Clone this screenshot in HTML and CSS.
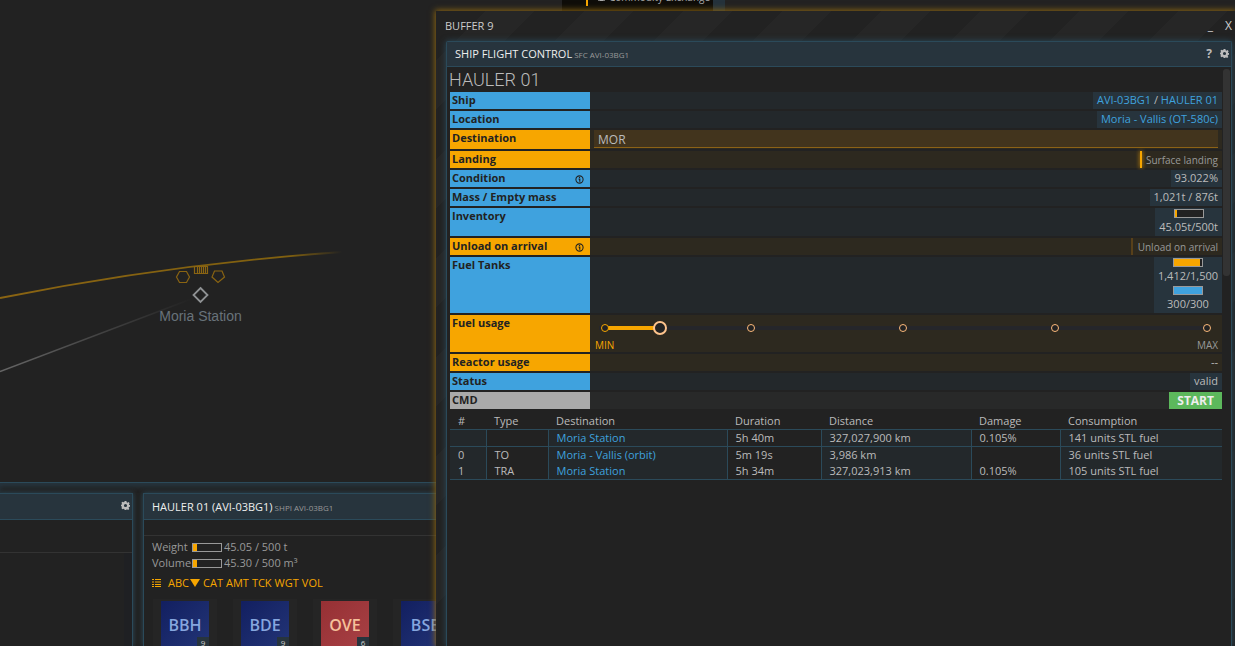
FILE: index.html
```
<!DOCTYPE html>
<html lang="en">
<head>
<meta charset="utf-8">
<title>Ship Flight Control</title>
<link rel="stylesheet" href="styles.css">
</head>
<body>
<svg class="defs" aria-hidden="true">
  <symbol id="gear" viewBox="0 0 16 16">
    <path fill="currentColor" fill-rule="evenodd" d="M6.400 0h3.200l.5 2.400 1.200.5L13.400 1.600l2 2.200-1.300 2 .5 1.100 1.400.4v2.900l-1.800.5-.6 1.300 1.200 2-2.200 2-2-1.200-1.100.5L9.600 16H6.400l-.5-1.900-1.200-.5-2 1.200-2.100-2.200 1.200-1.900-.5-1.200L0 9.600V6.800l1.400-.4.5-1.200-1.200-1.900 2.100-2.100 2 1.200 1.100-.5zM8 5.200a2.800 2.800 0 1 0 0 5.600 2.800 2.800 0 0 0 0-5.600z"/>
  </symbol>
  <symbol id="info" viewBox="0 0 10 10">
    <circle cx="5" cy="5" r="4" fill="none" stroke="currentColor" stroke-width="1.200"/>
    <path d="M4 4.500h1.300v3M5 2.200v1.100" fill="none" stroke="currentColor" stroke-width="1.300"/>
  </symbol>
</svg>

<main class="desktop">
  <section class="map">
    <svg class="map-view" width="436" height="482" viewBox="0 0 436 482">
      <defs>
        <linearGradient id="orbit" gradientUnits="userSpaceOnUse" x1="0" y1="0" x2="342" y2="0">
          <stop offset="0" stop-color="#8a6412"/><stop offset=".85" stop-color="#80600f"/><stop offset="1" stop-color="#80600f" stop-opacity="0"/>
        </linearGradient>
        <linearGradient id="trail" gradientUnits="userSpaceOnUse" x1="0" y1="0" x2="192" y2="0">
          <stop offset="0" stop-color="#666"/><stop offset="1" stop-color="#666" stop-opacity="0"/>
        </linearGradient>
      </defs>
      <path d="M0 298Q170 264 342 252" fill="none" stroke="url(#orbit)" stroke-width="1.800"/>
      <path d="M0 371.500Q98 334 194 298" fill="none" stroke="url(#trail)" stroke-width="1.400"/>
      <g fill="none" stroke="#8a6412" stroke-width="1.200">
        <path d="M179.500 271.500h7l3 5.500-3 5.500h-7l-3-5.500z"/>
        <path d="M214.500 271h7.500l2.500 6-6.500 5.500-6-5.500z"/>
        <path d="M194.500 266.500h13v7h-13zM197.500 267v6M199.500 267v6M201.500 267v6M203.500 267v6M205.500 267v6"/>
      </g>
      <path d="M200.500 288l7 7-7 7-7-7z" fill="none" stroke="#8f9294" stroke-width="1.800"/>
      <text class="map-label" x="200.500" y="321" text-anchor="middle">Moria Station</text>
    </svg>
  </section>

  <section class="dock">
    <article class="tile tile-left">
      <header class="tile-head"><button class="icon-btn push" aria-label="Settings"><svg><use href="#gear"/></svg></button></header>
      <div class="tile-bar"></div>
      <div class="tile-scroll"></div>
    </article>
    <article class="tile tile-ship">
      <header class="tile-head"><h2>HAULER 01 (AVI-03BG1)</h2><small>SHPI AVI-03BG1</small></header>
      <div class="tile-gap"></div>
      <div class="capacity">
        <div class="cap-row"><span class="cap-name">Weight</span><span class="gauge"><i style="width:13%"></i></span><span>45.05 / 500 t</span></div>
        <div class="cap-row"><span class="cap-name">Volume</span><span class="gauge"><i style="width:13%"></i></span><span>45.30 / 500 m³</span></div>
      </div>
      <nav class="sort">
        <button aria-label="List view"><svg width="9" height="8" viewBox="0 0 9 8"><path d="M0 .500h2m1 0h6M0 3h2m1 0h6M0 5.500h2m1 0h6M0 7.500h2m1 0h6" stroke="currentColor" fill="none"/></svg></button>
        <button>ABC<svg width="10" height="8" viewBox="0 0 10 8"><path d="M0 0h10L5 8z" fill="currentColor"/></svg></button>
        <button>CAT</button><button>AMT</button><button>TCK</button><button>WGT</button><button>VOL</button>
      </nav>
      <div class="items">
        <div class="slot"><div class="item blue">BBH<span class="count">9</span></div></div>
        <div class="slot"><div class="item blue">BDE<span class="count">9</span></div></div>
        <div class="slot"><div class="item red">OVE<span class="count">6</span></div></div>
        <div class="slot"><div class="item blue">BSE<span class="count">9</span></div></div>
      </div>
    </article>
  </section>

  <div class="menu">
    <div class="menu-item"><svg width="9" height="9" viewBox="0 0 9 9"><rect x=".500" y=".500" width="8" height="7" rx="2" fill="none" stroke="#aaa"/></svg>Commodity Exchange</div>
  </div>

  <section class="window">
    <header class="win-head">
      <h1>BUFFER 9</h1>
      <button class="push" aria-label="Minimize">_</button>
      <button aria-label="Close">X</button>
    </header>
    <div class="frame">
      <header class="frame-head">
        <h2>SHIP FLIGHT CONTROL</h2><small>SFC AVI-03BG1</small>
        <button class="help push" aria-label="Help">?</button>
        <button class="icon-btn" aria-label="Settings"><svg><use href="#gear"/></svg></button>
      </header>
      <div class="content">
        <div class="pane">
          <h3>HAULER 01</h3>
          <form class="form">
            <div class="row"><span class="label">Ship</span><div class="field"><div class="value"><a href="#">AVI-03BG1</a> / <a href="#">HAULER 01</a></div></div></div>
            <div class="row"><span class="label">Location</span><div class="field"><div class="value"><a href="#">Moria - Vallis (OT-580c)</a></div></div></div>
            <div class="row active"><label class="label" for="dest">Destination</label><div class="field"><input class="text" id="dest" type="text" value="MOR"></div></div>
            <div class="row active"><span class="label">Landing</span><div class="field"><label class="toggle"><input type="checkbox" checked>Surface landing</label></div></div>
            <div class="row"><span class="label">Condition<svg class="info"><use href="#info"/></svg></span><div class="field"><div class="value">93.022%</div></div></div>
            <div class="row"><span class="label">Mass / Empty mass</span><div class="field"><div class="value">1,021t / 876t</div></div></div>
            <div class="row"><span class="label">Inventory</span><div class="field"><div class="value stack"><span class="gauge dark"><i style="width:9%"></i></span><span class="amount">45.05t/500t</span></div></div></div>
            <div class="row active"><span class="label">Unload on arrival<svg class="info"><use href="#info"/></svg></span><div class="field"><label class="toggle wide"><input type="checkbox">Unload on arrival</label></div></div>
            <div class="row"><span class="label">Fuel Tanks</span><div class="field"><div class="value stack"><span class="gauge dark"><i style="width:94%"></i></span><span class="amount">1,412/1,500</span><span class="gauge dark sky"><i style="width:100%"></i></span><span class="amount">300/300</span></div></div></div>
            <div class="row active"><label class="label" for="fuel">Fuel usage</label>
              <div class="field">
                <div class="slider">
                  <div class="rail">
                    <span class="fill"></span>
                    <span class="dot on" style="left:1%"></span><span class="dot" style="left:25%"></span><span class="dot" style="left:50%"></span><span class="dot" style="left:75%"></span><span class="dot" style="left:100%"></span>
                    <input id="fuel" type="range" min="0" max="100" value="10">
                  </div>
                  <div class="marks"><span>MIN</span><span>MAX</span></div>
                </div>
              </div>
            </div>
            <div class="row active"><span class="label">Reactor usage</span><div class="field"><div class="plain">--</div></div></div>
            <div class="row"><span class="label">Status</span><div class="field"><div class="value">valid</div></div></div>
            <div class="row cmd"><span class="label">CMD</span><div class="field"><button class="start" type="button">START</button></div></div>
          </form>
          <table class="plan">
            <colgroup><col class="c1"><col class="c2"><col class="c3"><col class="c4"><col class="c5"><col class="c6"><col></colgroup>
            <thead><tr><th>#</th><th>Type</th><th>Destination</th><th>Duration</th><th>Distance</th><th>Damage</th><th>Consumption</th></tr></thead>
            <tbody><tr><td></td><td></td><td><a href="#">Moria Station</a></td><td>5h 40m</td><td>327,027,900 km</td><td>0.105%</td><td>141 units STL fuel</td></tr></tbody>
            <tbody>
              <tr><td>0</td><td>TO</td><td><a href="#">Moria - Vallis (orbit)</a></td><td>5m 19s</td><td>3,986 km</td><td></td><td>36 units STL fuel</td></tr>
              <tr><td>1</td><td>TRA</td><td><a href="#">Moria Station</a></td><td>5h 34m</td><td>327,023,913 km</td><td>0.105%</td><td>105 units STL fuel</td></tr>
            </tbody>
          </table>
        </div>
        <div class="scrollbar"></div>
      </div>
    </div>
  </section>
</main>
</body>
</html>
```

FILE: styles.css
```
* { box-sizing: border-box; }
body {
  margin: 0;
  background: #222;
  color: #bbb;
  font: 11px/14px "Open Sans", "Noto Sans", sans-serif;
}
h1, h2, h3 { margin: 0; font-weight: 400; }
button {
  padding: 0;
  border: 0;
  background: none;
  color: inherit;
  font: inherit;
}
a { color: #3fa2de; text-decoration: none; }
.defs { position: absolute; width: 0; height: 0; }
.push { margin-left: auto; }

.desktop {
  position: relative;
  display: flex;
  flex-direction: column;
  height: 100vh;
  overflow: hidden;
}
.map { flex: 1; min-height: 0; overflow: hidden; border-bottom: 1px solid #2b4a5a; }
.map-view { display: block; }
.map-label { font: 14px "Liberation Sans", Arial, sans-serif; fill: #68727a; }

/* docked tiles */
.dock {
  display: flex;
  gap: 10px;
  height: 163px;
  padding-top: 10px;
  box-shadow: inset 0 4px 5px #26343d;
}
.tile {
  background: #222;
  border: 1px solid #2b4a5a;
  border-bottom: 0;
  box-shadow: 0 0 5px #2b4a5a;
  overflow: hidden;
}
.tile-left { flex: 0 0 133px; border-left: 0; display: flex; flex-direction: column; }
.tile-ship { flex: 1; }
.tile-head {
  display: flex;
  align-items: center;
  height: 26px;
  padding: 0 2px 2px 8px;
  background: #27343d;
  border-bottom: 1px solid #2b4a5a;
}
.tile-ship .tile-head { padding-bottom: 0; }
.tile-head h2, .frame-head h2 { font-size: 11px; color: #eee; }
.tile-head small, .frame-head small { margin-left: 2px; padding-top: 2px; font-size: 8px; color: #999; }
.icon-btn { display: flex; color: #bbb; }
.icon-btn svg { width: 9px; height: 9px; }
.tile-bar { height: 33px; border-bottom: 1px solid #333; }
.tile-scroll { flex: 1; align-self: flex-end; width: 8px; background: #1f2023; }
.tile-gap { height: 16px; border-bottom: 1px solid #333; }
.capacity { padding: 3px 8px 0; color: #999; }
.cap-row { display: flex; align-items: center; gap: 2px; height: 16px; }
.cap-name { width: 38px; }
.gauge { display: flex; width: 30px; height: 9px; border: 1px solid #999; }
.gauge i { background: #f7a600; }
.gauge.dark { background: #222; }
.gauge.sky i { background: #3fa2de; }
.sort { display: flex; align-items: center; gap: 3px; height: 24px; padding: 0 8px; color: #f7a600; }
.sort button { display: flex; align-items: center; gap: 1px; }
.sort button:first-child { margin-right: 4px; }
.items { display: flex; gap: 16px; padding: 4px 9px; }
.slot { flex: 0 0 64px; padding: 2px 8px 8px; background: #252525; }
.item {
  position: relative;
  height: 48px;
  font-size: 16px;
  font-weight: 600;
  line-height: 48px;
  text-align: center;
}
.item.blue { background: linear-gradient(135deg, #121f60, #233577); color: #86a6df; }
.item.red { background: linear-gradient(135deg, #963034, #a84145); color: #f5c09a; }
.count {
  position: absolute;
  right: 0;
  bottom: 0;
  width: 12px;
  height: 12px;
  background: #27343d;
  color: #ccc;
  font-size: 8px;
  font-weight: 400;
  line-height: 12px;
}

/* overlay menu */
.menu {
  position: absolute;
  top: -12px;
  left: 562px;
  width: 163px;
  height: 23px;
  padding-left: 15px;
  background: #0e0d09;
  border-right: 12px solid #24323b;
}
.menu-item {
  display: flex;
  align-items: center;
  gap: 3px;
  height: 18px;
  padding-left: 9px;
  border-left: 2px solid #f7a600;
  margin-left: 9px;
  color: #aaa;
  font-size: 10px;
  white-space: nowrap;
}

/* floating window */
.window {
  position: absolute;
  top: 11px;
  left: 436px;
  right: 0;
  bottom: 0;
  display: flex;
  flex-direction: column;
  padding: 0 3px 0 10px;
  background: repeating-linear-gradient(135deg, #222 0 35px, #262626 35px 70px);
  box-shadow: 0 0 6px 1px #8a6412;
}
.win-head { display: flex; align-items: center; gap: 12px; height: 30px; }
.win-head h1 { margin-left: -1px; font-size: 11px; color: #ccc; }
.win-head button { height: 20px; color: #ccc; font-size: 12px; line-height: 12px; }
.frame {
  flex: 1;
  display: flex;
  flex-direction: column;
  min-height: 0;
  background: #222;
  border: 1px solid #2b4a5a;
  border-bottom: 0;
  border-radius: 2px 2px 0 0;
  box-shadow: 0 0 6px #2b4a5a;
}
.frame-head {
  display: flex;
  align-items: center;
  height: 25px;
  padding: 0 2px 0 8px;
  background: #27343d;
  border-bottom: 1px solid #2b4a5a;
}
.help { margin-right: 8px; font-size: 12px; font-weight: 700; }
.frame-head .icon-btn { padding-bottom: 2px; }
.content { flex: 1; display: flex; min-height: 0; padding-left: 2px; }
.pane { flex: 1; min-width: 0; }
.scrollbar { width: 7px; height: 207px; margin: 2px 1px 0; background: #333; border-radius: 3px; }
h3 { font: 300 18px/25px Roboto, sans-serif; color: #bbb; }

.form { display: grid; gap: 2px; padding-left: 1px; }
.row { display: flex; min-height: 17px; background: #23282b; }
.label {
  flex: 0 0 140px;
  display: flex;
  align-items: flex-start;
  justify-content: space-between;
  padding: 1px 6px 0 2px;
  background: #3fa2de;
  color: #222;
  font-weight: 700;
}
.info { width: 9px; height: 9px; margin-top: 4px; }
.field { flex: 1; display: flex; justify-content: flex-end; min-width: 0; }
.value { padding: 1px 4px; background: #27343d; }
.value.stack { display: flex; flex-direction: column; align-items: center; padding: 0 4px; }
.stack .gauge { margin: 1px 0 2px; }
.amount { margin-bottom: 2px; }
.row.active { background: #2d291f; }
.row.active .label { background: #f7a600; }
.row.cmd { background: #282929; }
.row.cmd .label { background: #aaa; }
.text {
  flex: 1;
  height: 18px;
  min-width: 0;
  margin: 0 4px 1px;
  padding: 1px 4px 0;
  border: 0;
  border-bottom: 1px solid #8c6216;
  background: #42341d;
  color: #bbb;
  font: 12px/16px "Open Sans", "Noto Sans", sans-serif;
}
.toggle { display: flex; align-items: center; gap: 4px; padding-right: 4px; color: #999; font-size: 10px; }
.toggle.wide { gap: 5px; }
.toggle input {
  appearance: none;
  align-self: stretch;
  width: 2px;
  margin: 0;
  background: #58401a;
}
.toggle input:checked { background: #f7a600; box-shadow: 0 0 4px #f7a600; }
.plain { padding: 1px 4px; }
.start { padding: 0 8px; background: #5cb85c; color: #eee; font-size: 12px; font-weight: 700; }

.slider { flex: 1; padding: 6px 4px 0; }
.rail { position: relative; height: 14px; margin: 0 11px 0 5px; }
.rail::before {
  content: "";
  position: absolute;
  inset: 5px 0;
  background: #25262a;
}
.fill { position: absolute; top: 5px; bottom: 5px; left: 1%; width: 9%; background: #f7a600; }
.dot {
  position: absolute;
  top: 3px;
  width: 8px;
  height: 8px;
  margin-left: -4px;
  border: 1px solid #fdba7a;
  border-radius: 50%;
  background: #222;
}
.dot.on { border-color: #f7a600; }
.rail input {
  position: absolute;
  top: 0;
  left: -7px;
  width: calc(100% + 14px);
  height: 14px;
  margin: 0;
  appearance: none;
  background: none;
}
.rail input::-webkit-slider-thumb {
  appearance: none;
  width: 14px;
  height: 14px;
  border: 2px solid #fdc38c;
  border-radius: 50%;
  background: #222;
}
.marks { display: flex; justify-content: space-between; margin-top: 3px; padding-left: 1px; color: #999; font-size: 10px; }
.marks span:first-child { color: #f7a600; }

.plan {
  width: calc(100% - 1px);
  margin: 4px 0 0 1px;
  border-collapse: collapse;
  table-layout: fixed;
}
.plan th, .plan td { height: 16px; padding: 0 8px 1px; font-weight: 400; text-align: left; line-height: 15px; white-space: nowrap; }
.plan tbody { border-top: 1px solid #2b4a5a; border-bottom: 1px solid #2b4a5a; }
.plan td + td { border-left: 1px solid #2b4a5a; }
.plan td:nth-child(odd) { background: #23282b; }
.c1 { width: 36px; }
.c2 { width: 62px; }
.c3 { width: 179px; }
.c4 { width: 94px; }
.c5 { width: 150px; }
.c6 { width: 89px; }
```
